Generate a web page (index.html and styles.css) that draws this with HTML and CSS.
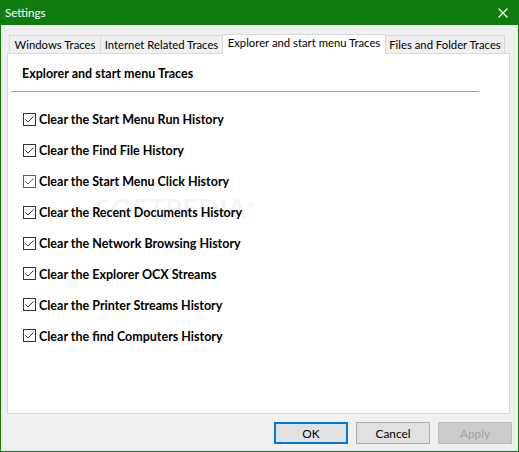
FILE: index.html
```html
<!DOCTYPE html>
<html lang="en">
<head>
<meta charset="utf-8">
<title>Settings</title>
<link rel="stylesheet" href="styles.css">
</head>
<body>
<div class="window">
  <div class="titlebar">
    <span class="title">Settings</span>
    <svg class="close" width="10" height="10" viewBox="0 0 10 10"><path d="M0.5 0.5 L9.5 9.5 M9.5 0.5 L0.5 9.5" stroke="#fff" stroke-width="1.1" fill="none"/></svg>
  </div>
  <div class="body">
    <div class="tabs">
      <div class="tab t1">Windows Traces</div>
      <div class="tab t2">Internet Related Traces</div>
      <div class="tab t3 active">Explorer and start menu Traces</div>
      <div class="tab t4">Files and Folder Traces</div>
    </div>
    <div class="panel">
      <div class="heading">Explorer and start menu Traces</div>
      <div class="sep"></div>
      <ul class="checks">
        <li class="check"><span class="box"><svg width="11" height="11" viewBox="0 0 11 11"><path d="M1.5 5.5 L4 8 L9.5 2.5" stroke="#333" stroke-width="1" fill="none"/></svg></span><span class="label">Clear the Start Menu Run History</span></li>
        <li class="check"><span class="box"><svg width="11" height="11" viewBox="0 0 11 11"><path d="M1.5 5.5 L4 8 L9.5 2.5" stroke="#333" stroke-width="1" fill="none"/></svg></span><span class="label">Clear the Find File History</span></li>
        <li class="check hover"><span class="box"><svg width="11" height="11" viewBox="0 0 11 11"><path d="M1.5 5.5 L4 8 L9.5 2.5" stroke="#0078d7" stroke-width="1" fill="none"/></svg></span><span class="label">Clear the Start Menu Click History</span></li>
        <li class="check"><span class="box"><svg width="11" height="11" viewBox="0 0 11 11"><path d="M1.5 5.5 L4 8 L9.5 2.5" stroke="#333" stroke-width="1" fill="none"/></svg></span><span class="label">Clear the Recent Documents History</span></li>
        <li class="check"><span class="box"><svg width="11" height="11" viewBox="0 0 11 11"><path d="M1.5 5.5 L4 8 L9.5 2.5" stroke="#333" stroke-width="1" fill="none"/></svg></span><span class="label">Clear the Network Browsing History</span></li>
        <li class="check"><span class="box"><svg width="11" height="11" viewBox="0 0 11 11"><path d="M1.5 5.5 L4 8 L9.5 2.5" stroke="#333" stroke-width="1" fill="none"/></svg></span><span class="label">Clear the Explorer OCX Streams</span></li>
        <li class="check"><span class="box"><svg width="11" height="11" viewBox="0 0 11 11"><path d="M1.5 5.5 L4 8 L9.5 2.5" stroke="#333" stroke-width="1" fill="none"/></svg></span><span class="label">Clear the Printer Streams History</span></li>
        <li class="check"><span class="box"><svg width="11" height="11" viewBox="0 0 11 11"><path d="M1.5 5.5 L4 8 L9.5 2.5" stroke="#333" stroke-width="1" fill="none"/></svg></span><span class="label">Clear the find Computers History</span></li>
      </ul>
      <div class="watermark">SOFTPEDIA<sup>®</sup></div>
    </div>
    <div class="footer">
      <button class="btn default">OK</button>
      <button class="btn cancel">Cancel</button>
      <button class="btn disabled" disabled>Apply</button>
    </div>
  </div>
</div>
</body>
</html>
```
FILE: styles.css
```css
* { box-sizing: border-box; }
html, body { margin: 0; padding: 0; }
body {
  font-family: "Lato", "Noto Sans", sans-serif;
  font-size: 11.3px;
  color: #000;
  background: #f0f0f0;
}
.window {
  width: 519px;
  height: 452px;
  border: 1px solid #107c10;
  background: #f0f0f0;
  display: flex;
  flex-direction: column;
}
.titlebar {
  height: 24px;
  background: #107c10;
  display: flex;
  align-items: center;
  justify-content: space-between;
  padding: 0 10px 0 4px;
  color: #fff;
}
.title { font-size: 11.6px; line-height: 16px; }
.close { display: block; }
.body {
  flex: 1;
  display: flex;
  flex-direction: column;
}
.tabs {
  display: flex;
  align-items: flex-end;
  height: 19px;
  margin-top: 9px;
  padding-left: 8px;
}
.tab {
  height: 18px;
  border: 1px solid #d9d9d9;
  border-bottom: none;
  background: #f0f0f0;
  text-align: center;
  line-height: 18px;
  white-space: nowrap;
  margin-left: -1px;
}
.tab.t1 { width: 92px; margin-left: 0; }
.tab.t2 { width: 123px; }
.tab.t3 { width: 164px; }
.tab.t4 { width: 120px; }
.tab.active {
  height: 20px;
  margin-bottom: -1px;
  background: #fff;
  position: relative;
  z-index: 1;
  line-height: 16px;
}
.panel {
  position: relative;
  margin-left: 6px;
  width: 503px;
  height: 361px;
  border: 1px solid #d9d9d9;
  background: #fff;
  padding-top: 12px;
}
.heading {
  font-size: 12.5px;
  font-weight: bold;
  line-height: 16px;
  margin-left: 14px;
}
.sep {
  height: 1px;
  background: #a0a0a0;
  margin: 9px 0 0 3px;
  width: 468px;
}
.checks {
  list-style: none;
  margin: 12px 0 0 15px;
  padding: 0;
}
.check {
  height: 30.9px;
  display: flex;
  align-items: center;
}
.box {
  width: 13px;
  height: 13px;
  border: 1px solid #333;
  margin-right: 3px;
  display: flex;
  align-items: center;
  justify-content: center;
  flex: none;
}
.box svg { display: block; }
.check.hover .box { border-color: #0078d7; }
.label {
  font-size: 12.5px;
  font-weight: bold;
  line-height: 16px;
  position: relative;
  z-index: 1;
  top: 1px;
}
.watermark {
  position: absolute;
  left: 88px;
  top: 138px;
  font-size: 26px;
  font-weight: bold;
  letter-spacing: 1px;
  color: #f4f4f4;
  z-index: 0;
}
.watermark sup { font-size: 8px; }
.footer {
  display: flex;
  justify-content: flex-end;
  gap: 8px;
  padding: 8px 6px 0 0;
}
.btn {
  width: 74px;
  height: 22px;
  font-family: inherit;
  font-size: 11.8px;
  border: 1px solid #adadad;
  background: #e1e1e1;
  color: #000;
  padding: 0;
  margin: 0;
}
.btn.default { border: 2px solid #0078d7; }
.btn.disabled { background: #cccccc; border-color: #bfbfbf; color: #a0a0a0; }
```
